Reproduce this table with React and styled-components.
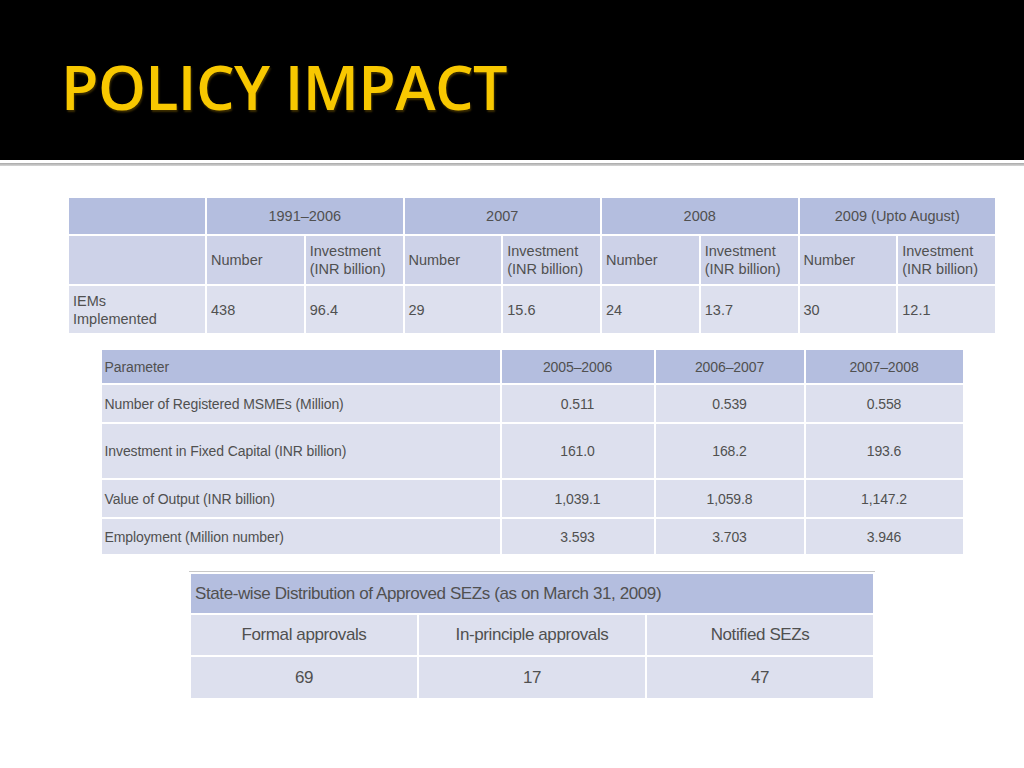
import React from 'react';
import styled, { createGlobalStyle } from 'styled-components';

const GlobalStyle = createGlobalStyle`
  html, body {
    margin: 0;
    padding: 0;
    background: #ffffff;
  }
  body {
    font-family: "Liberation Sans", Arial, sans-serif;
  }
`;

const iemYears = ['1991–2006', '2007', '2008', '2009 (Upto August)'];
const iemValues = ['438', '96.4', '29', '15.6', '24', '13.7', '30', '12.1'];

const msmeYears = ['2005–2006', '2006–2007', '2007–2008'];
const msmeRows = [
  { label: 'Number of Registered MSMEs (Million)', values: ['0.511', '0.539', '0.558'], height: 39 },
  { label: 'Investment in Fixed Capital (INR billion)', values: ['161.0', '168.2', '193.6'], height: 56 },
  { label: 'Value of Output (INR billion)', values: ['1,039.1', '1,059.8', '1,147.2'], height: 39 },
  { label: 'Employment (Million number)', values: ['3.593', '3.703', '3.946'], height: 37 },
];

const sezCols = [
  { label: 'Formal approvals', value: '69', width: 226 },
  { label: 'In-principle approvals', value: '17', width: 218 },
  { label: 'Notified SEZs', value: '47', width: 240 },
];

const App = () => {
  return (
    <Slide>
      <GlobalStyle />
      <TitleBar>
        <Title>POLICY IMPACT</Title>
      </TitleBar>
      <Rule />
      <Content>
        <IemTable>
          <tbody>
            <tr>
              <Cell $tone="dark" $w={138} />
              {iemYears.map((year) => (
                <Cell key={year} $tone="dark" colSpan={2} $align="center">
                  {year}
                </Cell>
              ))}
            </tr>
            <tr>
              <Cell $tone="mid" $h={50} />
              {iemYears.map((year) => (
                <React.Fragment key={year}>
                  <Cell $tone="mid" $w={98}>Number</Cell>
                  <Cell $tone="mid" $w={99}>
                    Investment
                    <br />
                    (INR billion)
                  </Cell>
                </React.Fragment>
              ))}
            </tr>
            <tr>
              <Cell $tone="light" $h={49}>
                IEMs
                <br />
                Implemented
              </Cell>
              {iemValues.map((value, i) => (
                <Cell key={i} $tone="light">
                  {value}
                </Cell>
              ))}
            </tr>
          </tbody>
        </IemTable>

        <MsmeTable>
          <tbody>
            <tr>
              <MsmeCell $tone="dark" $w={400} $h={35}>
                Parameter
              </MsmeCell>
              {msmeYears.map((year, i) => (
                <MsmeCell key={year} $tone="dark" $align="center" $w={[154, 150, 159][i]}>
                  {year}
                </MsmeCell>
              ))}
            </tr>
            {msmeRows.map((row) => (
              <tr key={row.label}>
                <MsmeCell $tone="light" $h={row.height}>
                  {row.label}
                </MsmeCell>
                {row.values.map((value, i) => (
                  <MsmeCell key={i} $tone="light" $align="center">
                    {value}
                  </MsmeCell>
                ))}
              </tr>
            ))}
          </tbody>
        </MsmeTable>

        <SezTable>
          <tbody>
            <tr>
              <SezCell $tone="dark" colSpan={3} $h={41}>
                State-wise Distribution of Approved SEZs (as on March 31, 2009)
              </SezCell>
            </tr>
            <tr>
              {sezCols.map((col) => (
                <SezCell key={col.label} $tone="light" $align="center" $w={col.width} $h={42}>
                  {col.label}
                </SezCell>
              ))}
            </tr>
            <tr>
              {sezCols.map((col) => (
                <SezCell key={col.label} $tone="light" $align="center" $h={43}>
                  {col.value}
                </SezCell>
              ))}
            </tr>
          </tbody>
        </SezTable>
      </Content>
    </Slide>
  );
};

const tones = {
  dark: '#b4bedf',
  mid: '#cdd2e8',
  light: '#dde0ee',
};

const Slide = styled.div`
  width: 1024px;
  height: 768px;
  background: #ffffff;
  overflow: hidden;
`;

const TitleBar = styled.header`
  height: 160px;
  background: #000000;
  display: flex;
  align-items: center;
  padding-left: 61px;
  box-sizing: border-box;
`;

const Title = styled.h1`
  margin: 12px 0 0;
  font-family: "Open Sans", "Noto Sans", sans-serif;
  font-weight: 600;
  font-size: 61px;
  letter-spacing: -0.6px;
  color: #f8c800;
  text-shadow: 1px 2px 2px rgba(120, 90, 0, 0.5);
`;

const Rule = styled.div`
  margin-top: 3px;
  height: 3px;
  background: linear-gradient(#a8a8a8, #d6d6d6);
`;

const Content = styled.main`
  display: flex;
  flex-direction: column;
  align-items: center;
  padding: 30px 0 0 40px;
`;

const BaseTable = styled.table`
  border-collapse: collapse;
  table-layout: fixed;
  color: #505050;
`;

const IemTable = styled(BaseTable)`
  width: 930px;
  font-size: 14.5px;
  margin-bottom: 13px;
`;

const MsmeTable = styled(BaseTable)`
  width: 865px;
  font-size: 14px;
  margin-bottom: 16px;
`;

const SezTable = styled(BaseTable)`
  width: 686px;
  font-size: 17px;
  box-shadow: 0 -1px 0 #c8c8c8;
`;

const Cell = styled.td`
  background: ${({ $tone }) => tones[$tone]};
  border: 2px solid #ffffff;
  padding: 0 4px;
  height: ${({ $h }) => ($h ? `${$h}px` : '38px')};
  width: ${({ $w }) => ($w ? `${$w}px` : 'auto')};
  text-align: ${({ $align }) => $align || 'left'};
  vertical-align: middle;
  line-height: 18px;
  box-sizing: border-box;
`;

const MsmeCell = styled(Cell)`
  height: ${({ $h }) => ($h ? `${$h}px` : '35px')};
  padding: 0 3px;
  line-height: 16px;
  letter-spacing: -0.1px;
`;

const SezCell = styled(Cell)`
  padding: 0 4px;
  letter-spacing: -0.4px;
`;

export default App;
